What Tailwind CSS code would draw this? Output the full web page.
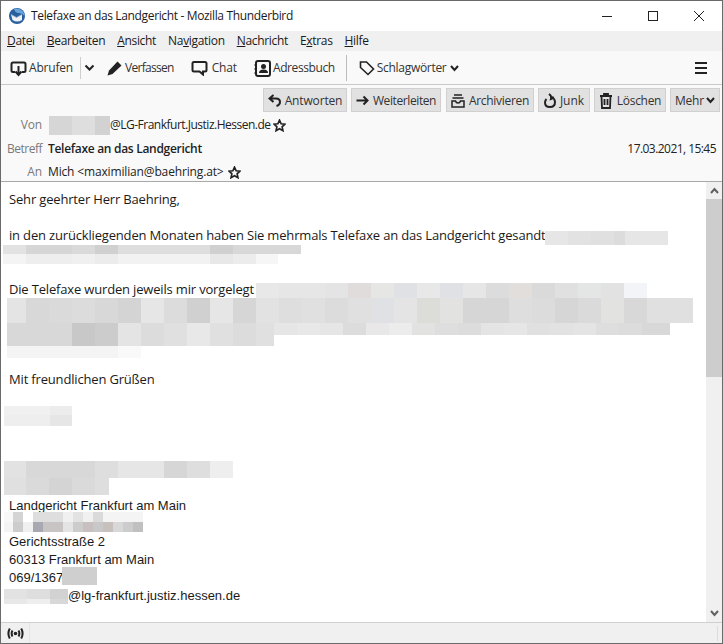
<!DOCTYPE html>
<html lang="de">
<head>
  <meta charset="UTF-8" />
  <title>Telefaxe an das Landgericht - Mozilla Thunderbird</title>
  <script src="https://cdn.jsdelivr.net/npm/@tailwindcss/browser@4"></script>
</head>
<body class="w-[723px] h-[644px] overflow-hidden bg-white text-[#1a1a1a] font-['Open_Sans','Noto_Sans',sans-serif] text-[12px]">
  <div class="relative w-[723px] h-[644px] flex flex-col border border-[#6a6a6a]">

    <!-- title bar -->
    <div class="h-[30px] shrink-0 flex items-center bg-white">
      <svg class="ml-[8px] w-[16px] h-[16px]" viewBox="0 0 16 16">
        <circle cx="8" cy="8" r="8" fill="#2a5f9e"/>
        <path d="M5 0.800 Q10 -0.500 14 3.500 Q15.500 6 15.500 8 Q13 4.500 9 5 Q6 4.500 5 0.800 Z" fill="#6aa5dc"/>
        <path d="M2 6.500 L7.500 9.500 L13 6.500 L13 12 Q8 15 3.500 12 Z" fill="#eef2f7"/>
        <path d="M2 6.500 L7.500 9.500 L13 6.500" fill="none" stroke="#9db4cc" stroke-width="0.800"/>
      </svg>
      <span class="ml-[6px] text-[12px] tracking-[-0.35px]">Telefaxe an das Landgericht - Mozilla Thunderbird</span>
      <div class="ml-auto flex items-center">
        <div class="w-[46px] h-[30px] flex items-center justify-center">
          <div class="w-[10px] h-px bg-[#222]"></div>
        </div>
        <div class="w-[46px] h-[30px] flex items-center justify-center">
          <div class="w-[10px] h-[10px] border border-[#222]"></div>
        </div>
        <div class="w-[46px] h-[30px] flex items-center justify-center">
          <svg class="w-[10px] h-[10px]" viewBox="0 0 10 10"><path d="M0 0 L10 10 M10 0 L0 10" stroke="#222" stroke-width="1" fill="none"/></svg>
        </div>
      </div>
    </div>

    <!-- menu bar -->
    <div class="h-[20px] shrink-0 flex items-center bg-[#f0f0f0] pl-[6px] gap-[12px] text-[12px] tracking-[-0.32px]">
      <span><u>D</u>atei</span>
      <span><u>B</u>earbeiten</span>
      <span><u>A</u>nsicht</span>
      <span>Na<u>v</u>igation</span>
      <span><u>N</u>achricht</span>
      <span>E<u>x</u>tras</span>
      <span><u>H</u>ilfe</span>
    </div>

    <!-- main toolbar -->
    <div class="h-[34px] pt-px shrink-0 flex items-center bg-[#f9f9f9] border-b border-[#c9c9c9] text-[12px] text-[#333]">
      <svg class="ml-[9px] w-[17px] h-[17px]" viewBox="0 0 17 17" fill="none" stroke="#222" stroke-width="2">
        <path d="M5 12 H3 Q1.500 12 1.500 10.500 V4 Q1.500 2.500 3 2.500 H14 Q15.500 2.500 15.500 4 V10.500 Q15.500 12 14 12 H12"/>
        <path d="M8.500 6 V14 M5.500 11.500 L8.500 15 L11.500 11.500" stroke-width="2"/>
      </svg>
      <span class="ml-[2px] tracking-[-0.2px]">Abrufen</span>
      <div class="ml-[7px] w-px h-[22px] bg-[#cfcfcf]"></div>
      <svg class="ml-[3px] w-[11px] h-[8px]" viewBox="0 0 11 8" fill="none" stroke="#222" stroke-width="2"><path d="M1.500 1.500 L5.500 5.500 L9.500 1.500"/></svg>
      <svg class="ml-[12px] w-[15px] h-[15px]" viewBox="0 0 15 15" fill="#222">
        <path d="M10.500 0.500 L14.500 4.500 L5.500 13 L0.500 14.500 L2 9.500 Z"/>
      </svg>
      <span class="ml-[3px] tracking-[-0.7px]">Verfassen</span>
      <svg class="ml-[17px] w-[17px] h-[16px]" viewBox="0 0 17 16" fill="none" stroke="#222" stroke-width="2">
        <path d="M3 2 H14 Q15.500 2 15.500 3.500 V10 Q15.500 11.500 14 11.500 H12 V14.500 L8.500 11.500 H3 Q1.500 11.500 1.500 10 V3.500 Q1.500 2 3 2 Z"/>
      </svg>
      <span class="ml-[4px] tracking-[-0.15px]">Chat</span>
      <svg class="ml-[17px] w-[17px] h-[17px]" viewBox="0 0 17 17">
        <rect x="2" y="1" width="14" height="15" rx="2" fill="none" stroke="#222" stroke-width="2"/>
        <circle cx="9.500" cy="6.500" r="2.500" fill="#222"/>
        <path d="M5 13 Q5 9.500 9.500 9.500 Q14 9.500 14 13 Z" fill="#222"/>
        <path d="M0.500 5 H3 M0.500 9 H3 M0.500 13 H3" stroke="#222" stroke-width="1.500"/>
      </svg>
      <span class="ml-[2px] tracking-[-0.4px]">Adressbuch</span>
      <div class="ml-[11px] w-px h-[26px] bg-[#bdbdbd]"></div>
      <svg class="ml-[12px] w-[16px] h-[16px]" viewBox="0 0 16 16" fill="none" stroke="#222" stroke-width="1.600">
        <path d="M1.500 2 H7.500 L14.500 9 L9 14.500 L1.500 7.500 Z"/>
      </svg>
      <span class="ml-[2px] tracking-[-0.3px]">Schlagwörter</span>
      <svg class="ml-[4px] w-[9px] h-[7px]" viewBox="0 0 9 7" fill="none" stroke="#222" stroke-width="2"><path d="M1 1 L4.500 5 L8 1"/></svg>
      <div class="ml-auto mr-[15px] w-[12px] flex flex-col gap-[3px]">
        <div class="h-[2px] bg-[#222]"></div>
        <div class="h-[2px] bg-[#222]"></div>
        <div class="h-[2px] bg-[#222]"></div>
      </div>
    </div>

    <!-- message header -->
    <div class="h-[97px] shrink-0 flex flex-col bg-[#f9f9f9] border-b border-[#a9a9a9]">
      <div class="h-[29px] shrink-0 pt-[3px] flex items-start justify-end pr-[2px] gap-[4px] text-[12px] text-[#333]">
        <div class="h-[24px] w-[84px] pt-px flex items-center justify-center gap-[4px] bg-[#e1e1e1] border border-[#d0d0d0]">
          <svg class="w-[13px] h-[13px]" viewBox="0 0 13 13" fill="none" stroke="#222" stroke-width="2"><path d="M5.500 1 L1.500 4.500 L5.500 8 M1.500 4.500 H8 Q12 4.500 12 8 Q12 11 8.500 12"/></svg>
          <span class="tracking-[-0.15px]">Antworten</span>
        </div>
        <div class="h-[24px] w-[90px] pt-px mr-px flex items-center justify-center gap-[4px] bg-[#e1e1e1] border border-[#d0d0d0]">
          <svg class="w-[13px] h-[11px]" viewBox="0 0 13 11" fill="none" stroke="#222" stroke-width="2"><path d="M0.500 5.500 H11 M7.500 1.500 L11.500 5.500 L7.500 9.500"/></svg>
          <span class="tracking-[-0.4px]">Weiterleiten</span>
        </div>
        <div class="h-[24px] w-[88px] pt-px flex items-center justify-center gap-[4px] bg-[#e1e1e1] border border-[#d0d0d0]">
          <svg class="w-[14px] h-[14px]" viewBox="0 0 14 14" fill="none" stroke="#222" stroke-width="1.500"><path d="M3 1 H11 M1.500 4 H12.500" /><path d="M1 7 H4.500 Q5 9 7 9 Q9 9 9.500 7 H13 V13 H1 Z"/></svg>
          <span class="tracking-[-0.3px]">Archivieren</span>
        </div>
        <div class="h-[24px] w-[52px] pt-px flex items-center justify-center gap-[4px] bg-[#e1e1e1] border border-[#d0d0d0]">
          <svg class="w-[12px] h-[15px]" viewBox="0 0 12 15" fill="none" stroke="#222" stroke-width="2"><path d="M5 1 Q8 3 7 6 Q8.500 5.500 9 4.500 Q11 7 11 9 Q11 14 6 14 Q1 14 1 9.500 Q1 7.500 2.500 6"/></svg>
          <span>Junk</span>
        </div>
        <div class="h-[24px] w-[72px] pt-px flex items-center justify-center gap-[4px] bg-[#e1e1e1] border border-[#d0d0d0]">
          <svg class="w-[14px] h-[16px]" viewBox="0 0 13 16" fill="none" stroke="#222" stroke-width="1.800"><path d="M0.500 3 H12.500 M4.500 3 V1 H8.500 V3 M2 3 L2.500 15 H10.500 L11 3 M5 6 V12 M8 6 V12"/></svg>
          <span class="tracking-[-0.3px]">Löschen</span>
        </div>
        <div class="h-[24px] w-[50px] pt-px flex items-center justify-center gap-[2px] bg-[#e1e1e1] border border-[#d0d0d0]">
          <span class="tracking-[-0.15px]">Mehr</span>
          <svg class="w-[9px] h-[7px]" viewBox="0 0 9 7" fill="none" stroke="#222" stroke-width="2"><path d="M1 1 L4.500 5 L8 1"/></svg>
        </div>
      </div>
      <div class="h-[22px] shrink-0 flex items-center text-[12px]">
        <span class="w-[41px] text-right text-[#7a7a7a] tracking-[-0.15px]">Von</span>
        <span class="ml-[68px] text-[#222] tracking-[-0.5px]">@LG-Frankfurt.Justiz.Hessen.de</span>
        <svg class="ml-[2px] w-[13px] h-[13px]" viewBox="0 0 12 12" fill="none" stroke="#222" stroke-width="1.500"><path d="M6 1 L7.500 4.400 L11 4.800 L8.400 7.200 L9.200 10.800 L6 9 L2.800 10.800 L3.600 7.200 L1 4.800 L4.500 4.400 Z"/></svg>
      </div>
      <div class="h-[22px] shrink-0 mt-[2px] flex items-center text-[12px]">
        <span class="w-[41px] text-right text-[#7a7a7a] tracking-[-0.5px]">Betreff</span>
        <span class="ml-[6px] font-semibold text-[#222] tracking-[-0.3px]">Telefaxe an das Landgericht</span>
        <span class="ml-auto mr-[6px] text-[#222] tracking-[-0.55px]">17.03.2021, 15:45</span>
      </div>
      <div class="h-[18px] shrink-0 mt-[3px] flex items-center text-[12px]">
        <span class="w-[41px] text-right text-[#7a7a7a] tracking-[-0.15px]">An</span>
        <span class="ml-[6px] text-[#222] tracking-[-0.15px]">Mich &lt;maximilian@baehring.at&gt;</span>
        <svg class="ml-[4px] w-[13px] h-[13px]" viewBox="0 0 12 12" fill="none" stroke="#222" stroke-width="1.500"><path d="M6 1 L7.500 4.400 L11 4.800 L8.400 7.200 L9.200 10.800 L6 9 L2.800 10.800 L3.600 7.200 L1 4.800 L4.500 4.400 Z"/></svg>
      </div>
    </div>

    <!-- body + scrollbar -->
    <div class="flex-1 min-h-0 flex bg-white">
      <div class="flex-1 pl-[8px] pt-[8px]">
        <div class="flex flex-col text-[13px] leading-[18px] tracking-[-0.17px] text-[#1a1a1a]">
          <p class="h-[36px]">Sehr geehrter Herr Baehring,</p>
          <p class="h-[54px]">in den zurückliegenden Monaten haben Sie mehrmals Telefaxe an das Landgericht gesandt</p>
          <p class="h-[90px]">Die Telefaxe wurden jeweils mir vorgelegt</p>
          <p class="h-[127px]">Mit freundlichen Grüßen</p>
        </div>
        <div class="flex flex-col font-['Liberation_Sans',Arial,sans-serif] text-[13px] leading-[18px] text-[#1a1a1a]">
          <p class="h-[36px]">Landgericht Frankfurt am Main</p>
          <p>Gerichtsstraße 2</p>
          <p>60313 Frankfurt am Main</p>
          <p>069/1367</p>
          <p class="pl-[59px]">@lg-frankfurt.justiz.hessen.de</p>
        </div>
      </div>
      <div class="w-[16px] shrink-0 flex flex-col bg-[#f0f0f0]">
        <div class="h-[17px] flex items-center justify-center">
          <svg class="w-[9px] h-[7px]" viewBox="0 0 9 7" fill="none" stroke="#606060" stroke-width="2"><path d="M1 6 L4.500 2 L8 6"/></svg>
        </div>
        <div class="h-[178px] bg-[#cdcdcd]"></div>
        <div class="flex-1"></div>
        <div class="h-[17px] flex items-center justify-center">
          <svg class="w-[9px] h-[7px]" viewBox="0 0 9 7" fill="none" stroke="#606060" stroke-width="2"><path d="M1 1 L4.500 5 L8 1"/></svg>
        </div>
      </div>
    </div>

    <!-- status bar -->
    <div class="h-[21px] shrink-0 flex items-center bg-[#f0f0f0] border-t border-[#d0d0d0]">
      <div class="w-[29px] h-full flex items-center justify-center border-r border-[#e4e4e4]">
        <svg class="w-[17px] h-[11px]" viewBox="0 0 17 11" fill="none" stroke="#222" stroke-width="2">
          <circle cx="8.500" cy="5.500" r="1.800" fill="#222" stroke="none"/>
          <path d="M5.500 2.500 Q3.800 5.500 5.500 8.500 M11.500 2.500 Q13.200 5.500 11.500 8.500 M2.800 0.500 Q0 5.500 2.800 10.500 M14.200 0.500 Q17 5.500 14.200 10.500"/>
        </svg>
      </div>
      <div class="ml-auto mr-[4px] w-px h-[15px] bg-[#dcdcdc]"></div>
    </div>

    <!-- redaction mosaics, laid over the text -->
    <div id="mosaics"></div>
  </div>

  <script>
    // [x, y, height, [[width, colour], ...]]
    const mosaics = [
      [48, 115, 19, [[23,'d6d6d6'],[23,'dedede'],[15,'d2d2d2']]],
      [544, 230, 14, [[23,'e6e6e6'],[23,'e2e2e2'],[23,'e0e0e0'],[11,'dcdcdc'],[43,'e6e6e6']]],
      [2, 244, 9, [[23,'e2e2e2'],[46,'d6d6d6'],[23,'dadada'],[23,'d0d0d0'],[92,'dedede'],[23,'d0d0d0'],[68,'d8d8d8']]],
      [2, 253, 10, [[23,'f4f4f4'],[46,'eeeeee'],[23,'f0f0f0'],[23,'ececec'],[92,'f2f2f2'],[23,'e8e8e8'],[23,'ececec'],[22,'f6f6f6']]],
      [255, 282, 15, [[23,'e8e8e8'],[23,'e6e6e6'],[23,'e6e6e6'],[23,'e4e4e4'],[23,'e0dcdc'],[23,'e6e6e4'],[23,'dfe1e4'],[23,'e8e8e8'],[23,'dfe1e4'],[23,'e6e6e6'],[23,'dcdcdc'],[23,'e2dedc'],[23,'dadada'],[23,'e0e0e0'],[23,'e4e6e6'],[23,'e2e2e2'],[23,'f3f4f7']]],
      [6, 297, 25, [[19,'e4e4e4'],[23,'d8d8d8'],[23,'dadada'],[23,'dcdcdc'],[23,'d8d8d8'],[23,'d4d4d4'],[23,'e6e6e6'],[23,'dcdcdc'],[23,'d0d0d0'],[23,'e6e6e6'],[23,'d6d6d6'],[23,'e2e2e2'],[23,'dedede'],[23,'e0e0e0'],[23,'dcdcdc'],[23,'e0e0e0'],[23,'dfe1e4'],[23,'e4e4e4'],[23,'dcdcd8'],[23,'e2e2e0'],[23,'d6d6d6'],[23,'d6d6d6'],[23,'dedede'],[23,'dcdcdc'],[23,'d6d6d6'],[23,'dadada'],[23,'e2e2e0'],[23,'d8d8d8'],[46,'e0e0e0']]],
      [6, 322, 23, [[65,'d8d8d8'],[23,'c8c8c8'],[23,'cccccc'],[23,'e4e4e4'],[23,'dcdcdc'],[23,'e0e0e0'],[23,'e8e8e8'],[23,'e0e0e0'],[23,'dcdcdc'],[18,'e0e0e0']]],
      [273, 322, 12, [[23,'e6e6e6'],[23,'e8e8e8'],[23,'e6e6e6'],[23,'dcdcdc'],[23,'e8e8e8'],[23,'ececec'],[23,'e2e2e0'],[23,'dedede'],[23,'dcdcdc'],[23,'e4e4e4'],[23,'e6e6e6'],[23,'e0e0e0'],[23,'e2e2e2'],[23,'e4e4e4'],[23,'dedede'],[23,'dcdcdc'],[28,'d8d8d8']]],
      [6, 345, 12, [[111,'f4f4f4'],[23,'f9f9f9']]],
      [3, 405, 9, [[46,'f0f0f0'],[22,'ececec']]],
      [3, 414, 11, [[46,'eeeeee'],[22,'e6e6e6']]],
      [3, 460, 17, [[22,'e2e2e2'],[69,'d8d8d8'],[23,'dedede'],[46,'e6e6e6'],[23,'d6d6d6'],[23,'dedede'],[23,'eeeeee']]],
      [3, 477, 17, [[22,'e0e0e0'],[23,'dadada'],[23,'d4d4d4'],[23,'dadada'],[14,'dedede']]],
      [3, 511, 10, [[9,'f8f8f8'],[10,'d4d4d4'],[10,'ffffff'],[30,'dedede'],[10,'f0f0f0'],[10,'e2e2e2'],[10,'f0f0f0'],[10,'dadada'],[40,'f4f4f4']]],
      [3, 521, 10, [[9,'f4f4f4'],[10,'cccccc'],[10,'f0f0f0'],[10,'a8a8b0'],[20,'c8c4c4'],[10,'e4e4e4'],[10,'cccccc'],[10,'c8c0c0'],[10,'c8c8c8'],[10,'c8c0bc'],[10,'d8d8d8'],[10,'cccccc'],[10,'c0c0c0']]],
      [61, 566, 18, [[35,'cfcfcf']]],
      [3, 588, 10, [[23,'e2e2e2'],[23,'dedede'],[18,'d2d2d2']]],
      [3, 598, 5, [[23,'e8e8e8'],[23,'eeeeee'],[18,'d8d8d8']]],
    ];
    const host = document.getElementById('mosaics');
    for (const [x, y, h, cells] of mosaics) {
      const row = document.createElement('div');
      row.className = 'absolute flex';
      row.style.left = x + 'px';
      row.style.top = y + 'px';
      row.style.height = h + 'px';
      for (const [w, c] of cells) {
        const cell = document.createElement('div');
        cell.style.width = w + 'px';
        cell.style.background = '#' + c;
        row.appendChild(cell);
      }
      host.appendChild(row);
    }
  </script>
</body>
</html>
